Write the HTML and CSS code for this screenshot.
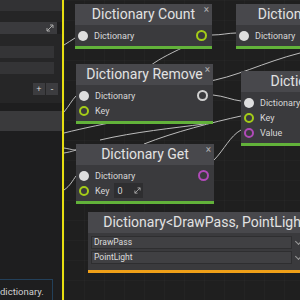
FILE: index.html
```html
<!DOCTYPE html>
<html lang="en">
<head>
  <meta charset="UTF-8">
  <title>Dictionary Nodes</title>
  <link rel="stylesheet" href="styles.css">
</head>
<body>

  <div class="sidebar">
    <div class="side-top"></div>
    <div class="side-gap"></div>
    <div class="side-field">
      <svg class="expand" width="8" height="8" viewBox="0 0 8 8"><path d="M1 7 L7 1 M4 1 H7 V4 M1 4 V7 H4" stroke="#aaa" stroke-width="1" fill="none"/></svg>
    </div>
    <div class="side-section">
      <div class="side-row"></div>
      <div class="side-row"></div>
      <div class="side-buttons">
        <button class="side-btn">+</button>
        <button class="side-btn">-</button>
      </div>
    </div>
    <div class="side-bar"></div>
    <div class="side-fill"></div>
    <div class="side-help">dictionary.</div>
  </div>

  <div class="divider"></div>

  <div class="canvas">
    <svg class="wires" width="236" height="300" viewBox="0 0 236 300">
      <g stroke="#bcbcbc" stroke-width="1" fill="none">
        <path d="M0 45 C4 43 7 40 11 38"/>
        <path d="M86 66 C96 58 110 52 126 44"/>
        <path d="M148 35 C158 35 164 33 172 33"/>
        <path d="M0 112 C5 106 8 100 12 96"/>
        <path d="M0 133 C20 128 40 124 70 118"/>
        <path d="M0 148 C6 149 9 150 12 150"/>
        <path d="M0 153 C6 152 9 151 12 150"/>
        <path d="M0 190 C6 186 9 180 12 176"/>
        <path d="M36 140 C70 132 110 128 140 124"/>
        <path d="M80 144 C110 132 150 122 177 116"/>
        <path d="M149 95 C160 96 168 100 177 101"/>
        <path d="M140 82 C170 78 200 62 236 53"/>
        <path d="M150 160 C160 150 166 136 177 130"/>
      </g>
    </svg>

    <div class="node node-count">
      <div class="node-head">Dictionary Count<span class="close">×</span></div>
      <div class="node-body">
        <div class="row"><span class="dot"></span>Dictionary<span class="ring ring-out ring-green"></span></div>
      </div>
      <div class="node-foot"></div>
    </div>

    <div class="node node-remove">
      <div class="node-head">Dictionary Remove<span class="close">×</span></div>
      <div class="node-body">
        <div class="row"><span class="dot"></span>Dictionary<span class="ring ring-out ring-white"></span></div>
        <div class="row"><span class="ring ring-green"></span>Key</div>
      </div>
      <div class="node-foot"></div>
    </div>

    <div class="node node-get">
      <div class="node-head">Dictionary Get<span class="close">×</span></div>
      <div class="node-body">
        <div class="row"><span class="dot"></span>Dictionary<span class="ring ring-out ring-purple"></span></div>
        <div class="row"><span class="ring ring-green"></span>Key
          <span class="key-field">0
            <svg width="7" height="7" viewBox="0 0 8 8"><path d="M1 7 L7 1 M4 1 H7 V4 M1 4 V7 H4" stroke="#aaa" stroke-width="1" fill="none"/></svg>
          </span>
        </div>
      </div>
      <div class="node-foot"></div>
    </div>

    <div class="node node-clear">
      <div class="node-head">Dictionary Clear<span class="close">×</span></div>
      <div class="node-body">
        <div class="row"><span class="dot"></span>Dictionary</div>
      </div>
      <div class="node-foot"></div>
    </div>

    <div class="node node-add">
      <div class="node-head">Dictionary Add<span class="close">×</span></div>
      <div class="node-body">
        <div class="row"><span class="dot"></span>Dictionary</div>
        <div class="row"><span class="ring ring-green"></span>Key</div>
        <div class="row"><span class="ring ring-purple"></span>Value</div>
      </div>
      <div class="node-foot"></div>
    </div>

    <div class="node node-type">
      <div class="node-head">Dictionary&lt;DrawPass, PointLight&gt;</div>
      <div class="node-body type-body">
        <div class="select"><span class="select-box">DrawPass</span><span class="chev"></span></div>
        <div class="select"><span class="select-box">PointLight</span><span class="chev"></span></div>
      </div>
      <div class="node-foot foot-orange"></div>
    </div>
  </div>

</body>
</html>
```

FILE: styles.css
```css
* {
  box-sizing: border-box;
}
html {
  height: 300px;
  overflow: hidden;
}
body {
  margin: 0;
  height: 300px;
  display: grid;
  grid-template-columns: 62px 2px 236px;
  grid-template-rows: 300px;
  overflow: hidden;
  background: #1e1e1e;
  font-family: Roboto, 'Liberation Sans', sans-serif;
}
.sidebar {
  display: grid;
  grid-template-rows: 11px 11px 12px 69px 28px 1fr 21px;
  background: #1e1e1f;
  overflow: hidden;
}
.side-top {
  background: #323234;
}
.side-gap {
  background: #252526;
}
.side-field {
  width: 57px;
  background: #3a3a3d;
  text-align: right;
  padding: 2px 3px 0 0;
  line-height: 0;
}
.side-section {
  background: #262627;
  padding: 12px 0 8px;
  display: flex;
  flex-direction: column;
  gap: 4px;
}
.side-row {
  width: 54px;
  height: 12px;
  background: #343436;
}
.side-buttons {
  display: flex;
  justify-content: flex-end;
  gap: 1px;
  padding: 5px 4px 0 0;
}
.side-btn {
  width: 12px;
  height: 12px;
  padding: 0;
  border: none;
  background: #3c3c3f;
  color: #ddd;
  font-size: 9px;
  line-height: 12px;
}
.side-bar {
  margin-top: 8px;
  background: #3a3a3c;
}
.side-help {
  width: 53px;
  border-top: 1px solid #23405a;
  border-right: 1px solid #23405a;
  color: #d0d0d0;
  font-size: 9.5px;
  padding-top: 6px;
}
.divider {
  background: #e6de10;
}
.canvas {
  position: relative;
  overflow: hidden;
  background-color: #1f1f1f;
  background-image:
    linear-gradient(rgba(255, 255, 255, 0.02) 1px, transparent 1px),
    linear-gradient(90deg, rgba(255, 255, 255, 0.02) 1px, transparent 1px);
  background-size: 20px 20px;
}
.wires {
  position: absolute;
  left: 0;
  top: 0;
}
.node {
  position: absolute;
  background: #3a3a3d;
  color: #d8d8d8;
}
.node-head {
  position: relative;
  height: 21px;
  background: #48484c;
  color: #e2e2e2;
  font-size: 14px;
  line-height: 21px;
  text-align: center;
  white-space: nowrap;
}
.close {
  position: absolute;
  right: 3px;
  top: -5px;
  font-size: 10px;
  color: #b0b0b0;
}
.node-body {
  padding: 3px 0 3px 3px;
}
.row {
  position: relative;
  display: flex;
  align-items: center;
  gap: 6px;
  height: 15px;
  font-size: 9px;
}
.dot {
  width: 10px;
  height: 10px;
  border-radius: 50%;
  background: #dedede;
}
.ring {
  width: 10px;
  height: 10px;
  border-radius: 50%;
  border: 2px solid #a4cc18;
}
.ring-out {
  position: absolute;
  right: 5px;
  top: 2px;
  width: 11px;
  height: 11px;
}
.ring-white {
  border-color: #d0d0d0;
}
.ring-purple {
  border-color: #b04ab8;
}
.ring-green {
  border-color: #a4cc18;
}
.node-foot {
  height: 3px;
  background: #62b23a;
}
.foot-orange {
  background: #f0a018;
}
.key-field {
  display: flex;
  align-items: center;
  justify-content: space-between;
  width: 29px;
  height: 15px;
  margin-left: -2px;
  padding: 0 2px 0 4px;
  background: #2e2e30;
}
.node-count {
  left: 11px;
  top: 4px;
  width: 137px;
}
.node-remove {
  left: 12px;
  top: 64px;
  width: 137px;
}
.node-get {
  left: 12px;
  top: 144px;
  width: 138px;
}
.node-clear {
  left: 172px;
  top: 4px;
  width: 142px;
}
.node-add {
  left: 177px;
  top: 71px;
  width: 150px;
}
.node-type {
  left: 24px;
  top: 212px;
  width: 240px;
}
.type-body {
  padding: 3px 0 6px 3px;
  display: flex;
  flex-direction: column;
  gap: 2px;
}
.select {
  display: flex;
  align-items: center;
  gap: 2px;
}
.select-box {
  width: 201px;
  height: 13px;
  background: #404043;
  border: 1px solid #2e2e30;
  font-size: 8.5px;
  line-height: 11px;
  padding-left: 2px;
  color: #dcdcdc;
}
.chev {
  width: 5px;
  height: 5px;
  border-right: 1px solid #999;
  border-bottom: 1px solid #999;
  transform: rotate(45deg);
  margin: -3px 0 0 2px;
}
```
